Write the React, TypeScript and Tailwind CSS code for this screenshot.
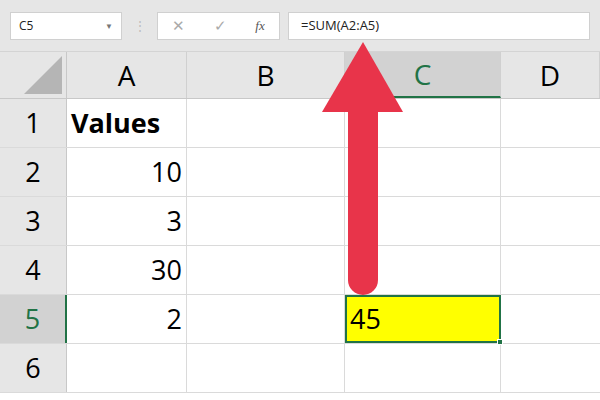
const cols = [
  { w: 'w-[120px]', label: 'A' },
  { w: 'w-[158px]', label: 'B' },
  { w: 'w-[156px]', label: 'C', sel: true },
  { w: 'flex-1', label: 'D' },
]

const rows: [string, string, string][] = [
  ['1', 'Values', ''],
  ['2', '10', ''],
  ['3', '3', ''],
  ['4', '30', ''],
  ['5', '2', '45'],
  ['6', '', ''],
]

export default function App() {
  return (
    <div className="relative w-[600px] h-[400px] overflow-hidden bg-white" style={{ fontFamily: '"Open Sans", "Liberation Sans", sans-serif' }}>
      {/* formula bar */}
      <div className="h-[52px] bg-[#e6e6e6] flex items-center px-[10px] gap-[8px] border-b border-[#d4d4d4]">
        <div className="w-[112px] h-[28px] bg-white border border-[#d0d0d0] flex items-center justify-between px-2 text-[12px] text-[#222]">
          C5<span className="text-[8px] text-[#777]">▼</span>
        </div>
        <div className="w-[19px] text-center text-[#bbb] text-[12px]">⋮</div>
        <div className="w-[123px] h-[28px] bg-white border border-[#d0d0d0] flex items-center justify-around text-[#aaa] text-[15px]">
          <span>✕</span>
          <span>✓</span>
          <span className="italic text-[#555] text-[13px]" style={{ fontFamily: '"Liberation Serif", serif' }}>fx</span>
        </div>
        <div className="flex-1 h-[28px] bg-white border border-[#d0d0d0] flex items-center px-3 text-[13px] text-[#222]">=SUM(A2:A5)</div>
      </div>
      {/* column headers */}
      <div className="flex h-[47px] bg-[#e6e6e6] border-b border-[#c8c8c8]">
        <div className="w-[67px] border-r border-[#c8c8c8] relative">
          <div className="absolute right-[4px] bottom-[4px] w-0 h-0 border-l-[38px] border-l-transparent border-b-[38px] border-b-[#b5b5b5]" />
        </div>
        {cols.map((c) => (
          <div key={c.label} className={`${c.w} flex items-center justify-center text-[28px] border-r border-[#d0d0d0] ${c.sel ? 'bg-[#d2d2d2] text-[#217346] border-b-2 border-b-[#217346]' : 'text-black'}`}>{c.label}</div>
        ))}
      </div>
      {rows.map(([n, a, c]) => (
        <div key={n} className="flex h-[49px] border-b border-[#dadada]">
          <div className={`w-[67px] flex items-center justify-center text-[27px] border-r ${n === '5' ? 'bg-[#d2d2d2] text-[#217346] border-r-2 border-r-[#217346]' : 'bg-[#e6e6e6] text-black border-r-[#c8c8c8]'}`}>{n}</div>
          <div className={`w-[120px] flex items-center px-[4px] text-[27px] border-r border-[#dadada] ${n === '1' ? 'font-bold justify-start' : 'justify-end'}`}>{a}</div>
          <div className="w-[158px] border-r border-[#dadada]" />
          <div className={`w-[156px] flex items-center px-[3px] text-[27px] ${c ? 'bg-[#ffff00] border-2 border-[#217346] relative' : 'border-r border-[#dadada]'}`}>
            {c}
            {c && <div className="absolute -right-[4px] -bottom-[4px] w-[6px] h-[6px] bg-[#217346] border border-white" />}
          </div>
          <div className="flex-1" />
        </div>
      ))}
      {/* arrow */}
      <svg className="absolute left-0 top-0" width="600" height="400">
        <polygon points="363,42 322,112 403,112" fill="#e8344a" />
        <path d="M348 108 H378 V280 A15 15 0 0 1 348 280 Z" fill="#e8344a" />
      </svg>
    </div>
  )
}
